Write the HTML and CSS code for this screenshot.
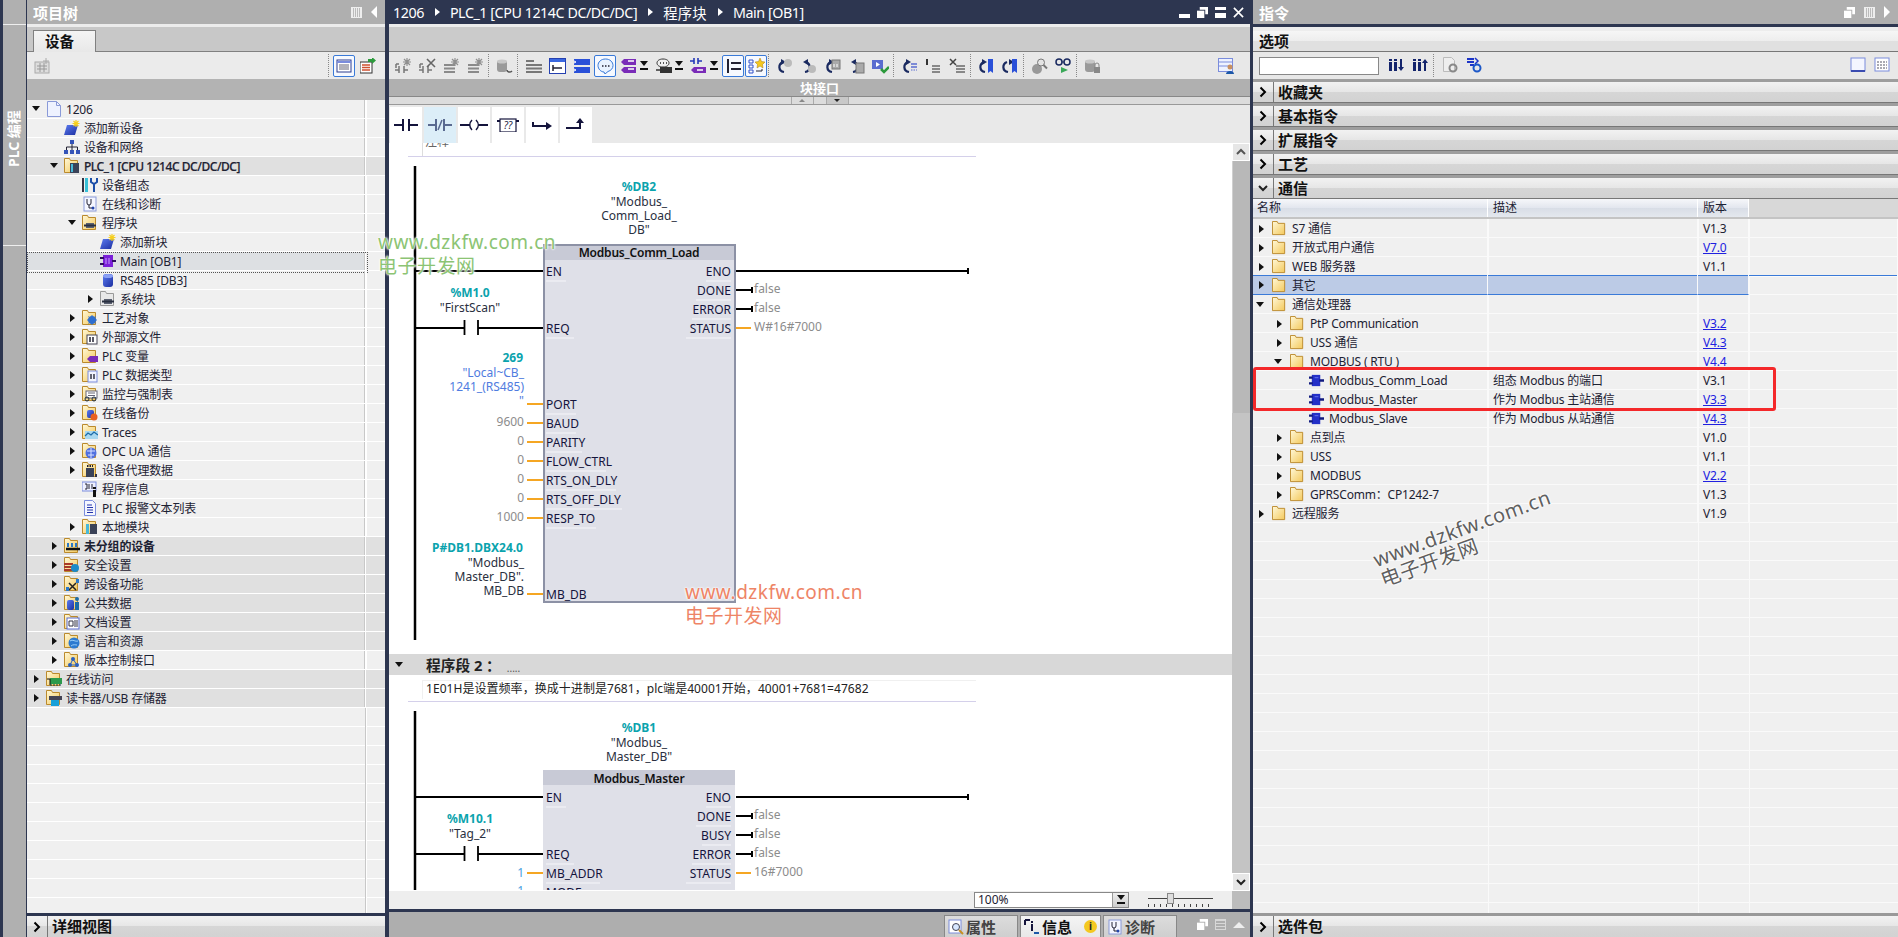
FILE: index.html
```html
<!DOCTYPE html>
<html lang="zh-CN">
<head>
  <meta charset="UTF-8">
  <title>Main [OB1]</title>
  <link rel="stylesheet" href="styles.css">
</head>
<body>
  <svg class="defs">
    <defs>
      <linearGradient id="gf" x1="0" y1="0" x2="1" y2="1"><stop offset="0" stop-color="#fff8d8"/><stop offset="1" stop-color="#f4c95c"/></linearGradient>
      <linearGradient id="gb" x1="0" y1="0" x2="1" y2="1"><stop offset="0" stop-color="#5c7cf0"/><stop offset="1" stop-color="#1c2ea0"/></linearGradient>
      <symbol id="fd" viewBox="0 0 16 16"><path d="M.5 .5h5l1 2h7v12H.5z" fill="url(#gf)" stroke="#bb8a2c"/></symbol>
      <symbol id="new" viewBox="0 0 16 16"><path d="M0 15 3 5h11l-3 10z" fill="url(#gb)"/><path d="M12 0v7M8.5 3.500h7M9.500 1l5 5M14.500 1l-5 5" stroke="#f6cf1e" stroke-width="1.200"/></symbol>
      <symbol id="blockgrey" viewBox="0 0 16 16"><rect x="4" y="8" width="8" height="5" fill="#5a6070"/><path d="M2 10.500h12" stroke="#2a3040" stroke-width="2"/></symbol>
      <symbol id="pin" viewBox="0 0 16 16"><rect x="3" y="2" width="9" height="12" fill="#2430c8"/><path d="M0 5h4M0 11h4M11 8h5" stroke="#101a80" stroke-width="2.500"/><path d="M6 5h4" stroke="#6a78f0"/></symbol>
      <symbol id="hoh" viewBox="0 0 17 16"><path d="M0 12h4M4 8v7M9 8v7M9 12h4M1 6h3M1 6v4" stroke="#777" stroke-width="1.500" fill="none"/></symbol>
      <symbol id="stack" viewBox="0 0 17 16"><path d="M1 7h11M1 10.500h11M1 14h11" stroke="#8a8a8a" stroke-width="2"/></symbol>
      <symbol id="spark" viewBox="0 0 17 16"><path d="M12 0v8M8 4h8M9 1l6 6M15 1l-6 6" stroke="#909090" stroke-width="1.200"/></symbol>
      <symbol id="chev" viewBox="0 0 10 12"><path d="M2.500 1.500 7 6l-4.500 4.500" fill="none" stroke="#000" stroke-width="2"/></symbol>
      <symbol id="chevd" viewBox="0 0 10 12"><path d="M1 4l4 4 4-4" fill="none" stroke="#222" stroke-width="2"/></symbol>
      <symbol id="restore" viewBox="0 0 12 12"><path d="M3 0h9v8H9V3H3z" fill="#fff"/><rect y="4" width="8" height="8" fill="#fff"/></symbol>
      <symbol id="tagpair" viewBox="0 0 17 16"><path d="M4 1h12v6H4L1 4z" fill="#7a2cb8"/><path d="M4 9h12v6H4L1 12z" fill="#7a2cb8"/><path d="M8 3h6M8 11h6" stroke="#fff" stroke-width="1.500"/></symbol>
      <symbol id="redo" viewBox="0 0 17 16"><path d="M8 14C2 13 2 6 7 4" fill="none" stroke="#1a2a60" stroke-width="2.200"/><path d="M5 1l5 3-5 3z" fill="#1a2a60"/></symbol>
      <symbol id="cyl" viewBox="0 0 17 16"><rect x="1" y="2" width="10" height="12" rx="3" fill="#9a9a9a"/><ellipse cx="6" cy="3.500" rx="5" ry="2" fill="#c8c8c8"/></symbol>
    </defs>
  </svg>

  <div class="app">
    <aside class="strip">
      <div class="strip-label">PLC 编程</div>
    </aside>

    <section class="tree-panel">
      <header class="panel-title">
        <span>项目树</span>
        <div class="title-tools">
          <i class="stripes"></i>
          <i class="tri-left"></i>
        </div>
      </header>
      <div class="panel-gap"></div>
      <div class="tab-strip"><div class="tab">设备</div></div>
      <div class="tree-tools">
        <svg class="ico" viewBox="0 0 16 16"><rect x="1" y="4" width="14" height="11" fill="#ddd" stroke="#aaa"/><path d="M3 8h10M3 11h10M6 5v9M10 5v9" stroke="#999"/><path d="M12 0v6M9 3h6" stroke="#aaa"/></svg>
        <i class="tool-sep"></i>
        <div class="tool-on"><svg class="ico" viewBox="0 0 16 16"><rect x="1" y="2" width="14" height="12" fill="#fff" stroke="#2b3d8f"/><path d="M1 4h14" stroke="#7a8cdc" stroke-width="2"/><path d="M3 7h10M3 9h10M3 11h10" stroke="#667"/></svg></div>
        <svg class="ico" viewBox="0 0 16 16"><rect x="0" y="4" width="12" height="11" fill="#fff" stroke="#333"/><path d="M2 7h8M2 9.500h8M2 12h8" stroke="#d05030" stroke-width="1.500"/><path d="M8 1h4V-1l4 3.500-4 3.500V4H8z" fill="#2c9a3c"/></svg>
      </div>
      <div class="tree-gap"></div>
      <div class="tree">
        <div class="tree-row"><i class="arr open"></i><svg class="ico" viewBox="0 0 16 16"><path d="M1.500 .5h9l4 4v11h-13z" fill="#eef2ff" stroke="#8a9ad8"/><path d="M10.500 .5v4h4" fill="none" stroke="#8a9ad8"/></svg><span>1206</span></div>
        <div class="tree-row lv1"><i class="arr none"></i><svg class="ico"><use href="#new"/></svg><span>添加新设备</span></div>
        <div class="tree-row lv1"><i class="arr none"></i><svg class="ico" viewBox="0 0 16 16"><rect x="6" y="1" width="4" height="4" fill="#3554b8"/><path d="M8 5v3M2.500 11V8h11v3M8 8v3" fill="none" stroke="#223"/><rect x="0" y="11" width="4" height="4" fill="#3554b8"/><rect x="6" y="11" width="4" height="4" fill="#3554b8"/><rect x="12" y="11" width="4" height="4" fill="#3554b8"/></svg><span>设备和网络</span></div>
        <div class="tree-row lv1 shade plc"><i class="arr open"></i><svg class="ico"><use href="#fd"/><rect x="6" y="5" width="9" height="10" fill="#3a4258"/><rect x="7" y="6" width="2" height="8" fill="#48b8d8"/></svg><span>PLC_1 [CPU 1214C DC/DC/DC]</span></div>
        <div class="tree-row lv2"><i class="arr none"></i><svg class="ico" viewBox="0 0 16 16"><rect x="0" y="1" width="2" height="14" fill="#334"/><rect x="3" y="1" width="3" height="14" fill="#38c0d8"/><path d="M9 1v4l3 2 3-2V1M12 7v8" fill="none" stroke="#1d4fa8" stroke-width="2"/></svg><span>设备组态</span></div>
        <div class="tree-row lv2"><i class="arr none"></i><svg class="ico" viewBox="0 0 16 16"><rect x="2" y="1" width="12" height="14" fill="#f4f6ff" stroke="#8a9ad8"/><path d="M5 3v4a2 2 0 0 0 4 0V3M7 9v3h4" fill="none" stroke="#223"/><circle cx="11" cy="12" r="1.500" fill="#2244aa"/></svg><span>在线和诊断</span></div>
        <div class="tree-row lv2"><i class="arr open"></i><svg class="ico"><use href="#fd"/><use href="#blockgrey"/></svg><span>程序块</span></div>
        <div class="tree-row lv3"><i class="arr none"></i><svg class="ico"><use href="#new"/></svg><span>添加新块</span></div>
        <div class="tree-row lv3 current"><i class="arr none"></i><svg class="ico" viewBox="0 0 16 16"><rect x="3" y="2" width="10" height="12" fill="#7a1fd8"/><path d="M0 5h4M0 11h4M12 8h4" stroke="#301060" stroke-width="2"/><path d="M6 5v6M9 5v6" stroke="#c8a0f8"/></svg><span>Main [OB1]</span></div>
        <div class="tree-row lv3"><i class="arr none"></i><svg class="ico" viewBox="0 0 16 16"><rect x="3" y="2" width="10" height="13" rx="3" fill="url(#gb)"/><ellipse cx="8" cy="4" rx="5" ry="2" fill="#8aa0f4"/></svg><span>RS485 [DB3]</span></div>
        <div class="tree-row lv3"><i class="arr"></i><svg class="ico"><path d="M.5 .5h5l1 2h7v12H.5z" fill="#e8e8e8" stroke="#999"/><use href="#blockgrey"/></svg><span>系统块</span></div>
        <div class="tree-row lv2"><i class="arr"></i><svg class="ico"><use href="#fd"/><circle cx="10" cy="10" r="4" fill="#2f6fd0"/><path d="M10 5v10M5 10h10M6.500 6.500l7 7M13.500 6.500l-7 7" stroke="#2f6fd0"/></svg><span>工艺对象</span></div>
        <div class="tree-row lv2"><i class="arr"></i><svg class="ico"><use href="#fd"/><rect x="5" y="6" width="10" height="9" fill="#fff" stroke="#445"/><path d="M8 8v5M11 8v5" stroke="#223" stroke-width="1.500"/></svg><span>外部源文件</span></div>
        <div class="tree-row lv2"><i class="arr"></i><svg class="ico"><use href="#fd"/><path d="M8 8h8v6H8l-3-3z" fill="#7a2cb8"/></svg><span>PLC 变量</span></div>
        <div class="tree-row lv2"><i class="arr"></i><svg class="ico"><use href="#fd"/><rect x="6" y="4" width="9" height="11" fill="#f2f4ff" stroke="#7a8cdc"/><path d="M9 7v5M12 7v5" stroke="#334" stroke-width="1.500"/></svg><span>PLC 数据类型</span></div>
        <div class="tree-row lv2"><i class="arr"></i><svg class="ico"><use href="#fd"/><rect x="4" y="5" width="11" height="7" fill="#fff" stroke="#667"/><path d="M6 7h7M6 9.500h7" stroke="#667"/><circle cx="5" cy="13" r="2" fill="none" stroke="#234"/><circle cx="12" cy="13" r="2" fill="none" stroke="#234"/></svg><span>监控与强制表</span></div>
        <div class="tree-row lv2"><i class="arr"></i><svg class="ico"><use href="#fd"/><rect x="5" y="5" width="7" height="8" rx="2" fill="url(#gb)"/><circle cx="12" cy="12" r="3.500" fill="#e86020"/></svg><span>在线备份</span></div>
        <div class="tree-row lv2"><i class="arr"></i><svg class="ico"><use href="#fd"/><rect x="3" y="7" width="13" height="8" fill="#a8d8f0"/><path d="M3 12l3-3 3 2 3-3 4 3" fill="none" stroke="#1c6ca8" stroke-width="1.300"/></svg><span>Traces</span></div>
        <div class="tree-row lv2"><i class="arr"></i><svg class="ico"><use href="#fd"/><circle cx="9" cy="10" r="5.500" fill="#5070e0"/><path d="M5 8h8M6 12h6M9 5v10" stroke="#d8e0ff"/></svg><span>OPC UA 通信</span></div>
        <div class="tree-row lv2"><i class="arr"></i><svg class="ico"><use href="#fd"/><rect x="4" y="6" width="8" height="9" fill="#3a4258"/><path d="M5 4h6" stroke="#223" stroke-width="2" stroke-dasharray="1.500 1"/><rect x="13" y="12" width="2" height="3" fill="#334"/></svg><span>设备代理数据</span></div>
        <div class="tree-row lv2"><i class="arr none"></i><svg class="ico" viewBox="0 0 16 16"><rect x="0" y="1" width="14" height="9" fill="#eef0ff" stroke="#7a8cdc"/><path d="M3 3h2v5H3M7 3v5M10 3v5" fill="none" stroke="#223"/><rect x="11" y="6" width="3" height="2" fill="#111"/><rect x="11" y="9" width="3" height="7" fill="#111"/></svg><span>程序信息</span></div>
        <div class="tree-row lv2"><i class="arr none"></i><svg class="ico" viewBox="0 0 16 16"><path d="M2.500 .5h8l3 3v12h-11z" fill="#f4f6ff" stroke="#7a8cdc"/><path d="M5 5h5M5 7.500h6M5 10h6M5 12.500h6" stroke="#2233aa"/></svg><span>PLC 报警文本列表</span></div>
        <div class="tree-row lv2"><i class="arr"></i><svg class="ico"><use href="#fd"/><rect x="4" y="5" width="3" height="10" fill="#48b8d8"/><rect x="8" y="5" width="7" height="10" fill="#3a4258"/></svg><span>本地模块</span></div>
        <div class="tree-row lv1 shade strong"><i class="arr"></i><svg class="ico"><use href="#fd"/><path d="M2 11h14" stroke="#111" stroke-width="2.500"/><path d="M4 5v4M8 5v4M12 5v4" stroke="#2a78c8" stroke-width="2"/></svg><span>未分组的设备</span></div>
        <div class="tree-row lv1 shade"><i class="arr"></i><svg class="ico"><use href="#fd"/><path d="M0 7h9M0 10h9M0 13h9" stroke="#a83828" stroke-width="2"/><circle cx="11" cy="11" r="4" fill="#1c8ac8"/></svg><span>安全设置</span></div>
        <div class="tree-row lv1 shade"><i class="arr"></i><svg class="ico"><use href="#fd"/><path d="M5 7l7 7M12 7l-7 7" stroke="#222" stroke-width="1.500"/><rect x="12" y="3" width="3" height="4" fill="#2a78c8"/><rect x="2" y="11" width="3" height="4" fill="#2a78c8"/></svg><span>跨设备功能</span></div>
        <div class="tree-row lv1 shade"><i class="arr"></i><svg class="ico"><use href="#fd"/><rect x="3" y="5" width="7" height="10" rx="2" fill="url(#gb)"/><circle cx="13" cy="4" r="2" fill="#1c6ca8"/><rect x="11" y="7" width="4" height="8" fill="#1c6ca8"/></svg><span>公共数据</span></div>
        <div class="tree-row lv1 shade"><i class="arr"></i><svg class="ico"><use href="#fd"/><rect x="3" y="4" width="12" height="11" fill="#fff" stroke="#5a6cd0"/><path d="M5 7h4v5H5zM11 6v7M13 6v7" fill="none" stroke="#334"/></svg><span>文档设置</span></div>
        <div class="tree-row lv1 shade"><i class="arr"></i><svg class="ico"><use href="#fd"/><circle cx="10" cy="10" r="5.500" fill="#2c7ad0"/><path d="M6 8c3-2 5 1 8 0M7 13c2-2 5-1 6-1" stroke="#9ad0f8" fill="none"/></svg><span>语言和资源</span></div>
        <div class="tree-row lv1"><i class="arr"></i><svg class="ico"><use href="#fd"/><path d="M9 7l-3 6h7z" fill="none" stroke="#2a60c0"/><circle cx="9" cy="7" r="2" fill="#2a60c0"/><circle cx="6" cy="13" r="2" fill="#2a60c0"/><circle cx="13" cy="13" r="2" fill="#2a60c0"/></svg><span>版本控制接口</span></div>
        <div class="tree-row shade"><i class="arr"></i><svg class="ico"><use href="#fd"/><rect x="4" y="7" width="12" height="6" fill="#2c9a4c"/><path d="M5 15v-2M8 15v-2M11 15v-2M14 15v-2" stroke="#134"/><path d="M1 8h3v6" stroke="#111" fill="none"/></svg><span>在线访问</span></div>
        <div class="tree-row shade"><i class="arr"></i><svg class="ico"><use href="#fd"/><rect x="3" y="6" width="13" height="4" fill="#445"/><rect x="5" y="10" width="8" height="6" fill="#18a0d8"/></svg><span>读卡器/USB 存储器</span></div>
      </div>
      <div class="dock-gap"></div>
      <div class="dock-bar">
        <div class="dock-arrow"><svg class="chev"><use href="#chev"/></svg></div>
        <div class="dock-name">详细视图</div>
      </div>
    </section>

    <main class="editor">
      <header class="crumbs">
        <span>1206</span><i class="tri"></i>
        <span>PLC_1 [CPU 1214C DC/DC/DC]</span><i class="tri"></i>
        <span class="crumb-zh">程序块</span><i class="tri"></i>
        <span>Main [OB1]</span>
        <div class="win-tools">
          <i class="win-min"></i>
          <svg class="win-ico"><use href="#restore"/></svg>
          <i class="win-max"></i>
          <svg class="win-ico" viewBox="0 0 12 12"><path d="M1 1l10 10M11 1 1 11" stroke="#fff" stroke-width="1.800"/></svg>
        </div>
      </header>
      <div class="panel-gap"></div>
      <div class="editor-band"></div>
      <div class="toolbar">
        <svg class="tb"><use href="#hoh"/><use href="#spark"/></svg>
        <svg class="tb"><use href="#hoh"/><path d="M8 1l8 8M16 1 8 9" stroke="#666" stroke-width="1.600"/></svg>
        <svg class="tb"><use href="#stack"/><use href="#spark"/></svg>
        <svg class="tb"><use href="#stack"/><use href="#spark"/></svg>
        <i class="tb-sep"></i>
        <svg class="tb"><use href="#cyl"/><path d="M16 13c-2 2-5 1-5-1" fill="none" stroke="#555" stroke-width="1.500"/></svg>
        <i class="tb-sep"></i>
        <svg class="tb" viewBox="0 0 17 16"><path d="M1 3h8M1 7h16M1 10.500h16M1 14h16" stroke="#777" stroke-width="2"/></svg>
        <svg class="tb" viewBox="0 0 17 16"><rect x=".5" y=".5" width="16" height="15" fill="#fff" stroke="#2540b0"/><rect x="1" y="1" width="15" height="3" fill="#3a68e0"/><path d="M4 7v6M4 10h9" stroke="#223" stroke-width="1.500"/></svg>
        <svg class="tb" viewBox="0 0 17 16"><rect x="1" y="1" width="16" height="6" fill="#2a50d8"/><rect x="1" y="9" width="16" height="6" fill="#2a50d8"/><path d="M1 3l2 1-2 1M1 11l2 1-2 1" stroke="#fff" fill="none"/></svg>
        <div class="tb-on"><svg class="tb" viewBox="0 0 17 16"><path d="M8.500 1C4 1 1 4 1 7.500S4 14 7 14l1 2 3-2.500c3-1 5-3 5-6C16 4 13 1 8.500 1z" fill="#e8f2ff" stroke="#3a7ad8"/><path d="M5 8h1.500M8 8h1.500M11 8h1.500" stroke="#223" stroke-width="1.500"/></svg></div>
        <div class="tb-drop"><svg class="tb"><use href="#tagpair"/></svg><i class="drop-arrow"></i></div>
        <div class="tb-drop"><svg class="tb" viewBox="0 0 17 16"><path d="M8 1c-4 0-6 2-6 4s2 4 6 4 6-2 6-4-2-4-6-4z" fill="#eee" stroke="#333"/><path d="M5 5h1M8 5h1M11 5h1" stroke="#222" stroke-width="1.500"/><rect x="5" y="9" width="12" height="6" fill="#333"/><path d="M1 12h4" stroke="#333" stroke-width="1.500"/></svg><i class="drop-arrow"></i></div>
        <div class="tb-drop"><svg class="tb" viewBox="0 0 17 16"><path d="M0 3h4M4 0v6M8 0v6M8 3h4" stroke="#2438b8" stroke-width="1.600"/><path d="M4 9h12v6H4L1 12z" fill="#7a2cb8"/><path d="M7 12h6" stroke="#fff" stroke-width="1.500"/></svg><i class="drop-arrow"></i></div>
        <div class="tb-on"><svg class="tb" viewBox="0 0 17 16"><path d="M3 1v14" stroke="#223" stroke-width="2"/><path d="M6 5h10M6 11h10" stroke="#223" stroke-width="2"/></svg></div>
        <div class="tb-on"><svg class="tb" viewBox="0 0 17 16"><path d="M1 2h4v3H1zM1 7h4v3H1zM1 12h4v3H1z" fill="none" stroke="#3050c8"/><path d="M12 0l1.500 3.500 3.500.5-2.500 2.500.5 3.500-3-2-3 2 .5-3.500L7 4l3.500-.5z" fill="#f4c820" stroke="#a87c10" stroke-width=".5"/><path d="M8 13h6v-2" fill="none" stroke="#223"/></svg></div>
        <i class="tb-sep"></i>
        <svg class="tb"><use href="#redo"/><circle cx="12" cy="5" r="4" fill="#bbb"/></svg>
        <svg class="tb" viewBox="0 0 17 16"><g transform="matrix(-1 0 0 1 13 0)"><use href="#redo"/></g><circle cx="12" cy="11" r="4" fill="#bbb"/></svg>
        <svg class="tb"><use href="#redo"/><rect x="8" y="2" width="8" height="9" fill="#aaa" stroke="#777"/><path d="M10 6v3M13 6v3" stroke="#fff"/></svg>
        <svg class="tb" viewBox="0 0 17 16"><g transform="matrix(-1 0 0 1 13 0)"><use href="#redo"/></g><rect x="8" y="5" width="8" height="10" fill="#aaa" stroke="#777"/></svg>
        <svg class="tb" viewBox="0 0 17 16"><rect x="0" y="2" width="11" height="9" fill="#5a6cd0"/><path d="M4 4l4 2.500L4 9z" fill="#fff"/><path d="M9 11l3 3 5-5" fill="none" stroke="#2c9a3c" stroke-width="2.500"/></svg>
        <i class="tb-sep"></i>
        <svg class="tb" viewBox="0 0 17 16"><path d="M8 14C2 13 2 6 7 4" fill="none" stroke="#1a2a60" stroke-width="2.200"/><path d="M5 1l5 3-5 3z" fill="#1a2a60"/><path d="M10 6h6M10 9h6" stroke="#5a6cd0" stroke-width="1.500"/><path d="M10 12h6" stroke="#5a6cd0" stroke-dasharray="1.500 1"/></svg>
        <svg class="tb" viewBox="0 0 17 16"><path d="M2 1v6" stroke="#333" stroke-width="2"/><path d="M7 8h8M7 11h8M7 14h8" stroke="#888" stroke-width="2"/></svg>
        <svg class="tb" viewBox="0 0 17 16"><path d="M1 1l6 6M7 1 1 7" stroke="#444" stroke-width="1.500"/><path d="M7 8h9M7 11h9M7 14h9" stroke="#888" stroke-width="2"/></svg>
        <i class="tb-sep"></i>
        <svg class="tb" viewBox="0 0 17 16"><path d="M7 14C1 13 1 6 6 4" fill="none" stroke="#1a2a60" stroke-width="2.200"/><path d="M4 1l5 3-5 3z" fill="#1a2a60"/><path d="M10 1h5v14l-2.500-2-2.500 2z" fill="#2a50d8"/></svg>
        <svg class="tb" viewBox="0 0 17 16"><path d="M9 14c6-1 6-8 1-10" fill="none" stroke="#1a2a60" stroke-width="2.200" transform="matrix(-1 0 0 1 15 0)"/><path d="M8 1 3 4l5 3z" fill="#1a2a60" transform="matrix(-1 0 0 1 15 0)"/><path d="M10 1h5v14l-2.500-2-2.500 2z" fill="#2a50d8"/></svg>
        <i class="tb-sep"></i>
        <svg class="tb" viewBox="0 0 17 16"><circle cx="6" cy="11" r="5" fill="#999"/><circle cx="10" cy="4.500" r="3.500" fill="#e4e4e4" stroke="#777"/><path d="M12.500 7l3.500 3.500" stroke="#777" stroke-width="2"/></svg>
        <svg class="tb" viewBox="0 0 17 16"><circle cx="4" cy="4" r="3" fill="none" stroke="#1a2a60" stroke-width="1.500"/><circle cx="12" cy="4" r="3" fill="none" stroke="#1a2a60" stroke-width="1.500"/><path d="M7 4h2" stroke="#1a2a60"/><path d="M6 9l7 3-7 3z" fill="#3aa858"/></svg>
        <i class="tb-sep"></i>
        <svg class="tb"><use href="#cyl"/><rect x="10" y="9" width="6" height="6" fill="#888"/><path d="M11 9V7a2 2 0 0 1 4 0v2" fill="none" stroke="#888"/></svg>
        <svg class="tb tb-end" viewBox="0 0 17 16"><rect x=".5" y=".5" width="14" height="13" fill="#eef2ff" stroke="#7a8cdc"/><path d="M1 4h13M1 8h13" stroke="#7a8cdc"/><circle cx="12" cy="9" r="2.500" fill="#c89060"/><path d="M8 16c0-4 8-4 8 0z" fill="#1c58a8"/></svg>
      </div>
      <div class="iface-bar">块接口</div>
      <div class="iface-handle">
        <div class="handle"><i class="tri-up"></i></div>
        <div class="handle handle-on"><i class="tri-down"></i></div>
      </div>
      <div class="favs">
        <div class="fav"><svg class="fav-ico" viewBox="0 0 30 14"><path d="M3 7h9M12 1v12M18 1v12M18 7h9" stroke="#14143c" stroke-width="2"/></svg></div>
        <div class="fav fav-on"><svg class="fav-ico" viewBox="0 0 30 14"><path d="M3 7h8M11 1v12M19 1v12M19 7h8" stroke="#5a6a90" stroke-width="2"/><path d="M17 2l-4 10" stroke="#5a6a90" stroke-width="1.500"/></svg></div>
        <div class="fav"><svg class="fav-ico" viewBox="0 0 30 14"><path d="M1 7h10M19 7h10" stroke="#14143c" stroke-width="2"/><path d="M13 2c-3 3-3 7 0 10M17 2c3 3 3 7 0 10" fill="none" stroke="#14143c" stroke-width="1.500"/></svg></div>
        <div class="fav"><svg class="fav-ico" viewBox="0 0 30 14"><rect x="7" y="1" width="16" height="13" fill="none" stroke="#14143c" stroke-width="1.200"/><path d="M4 3h3M23 3h3" stroke="#14143c" stroke-width="2"/><text class="fav-q" x="15" y="11">??</text></svg></div>
        <div class="fav"><svg class="fav-ico" viewBox="0 0 30 14"><path d="M6 4v4h14" fill="none" stroke="#14143c" stroke-width="2"/><path d="M19 4l6 4-6 4z" fill="#14143c"/></svg></div>
        <div class="fav"><svg class="fav-ico" viewBox="0 0 30 14"><path d="M5 10h14V4" fill="none" stroke="#14143c" stroke-width="2"/><path d="M15 5l4-5 4 5z" fill="#14143c"/></svg></div>
      </div>

      <div class="work">
        <div class="canvas">
          <div class="clip-note"><span>注释</span></div>

          <svg class="lad net1" viewBox="389 157 843 497">
            <path class="rail" d="M415 166V640"/>
            <path class="wire" d="M415 271H544M736 271H968M968 268V274M736 290H752M752 287V293M736 309H752M752 306V312M415 328H464M478 328H544"/>
            <path class="bar" d="M464.500 320V335M478 320V335"/>
            <path class="wire-o" d="M736 328H751M527 404H544M527 423H544M527 442H544M527 461H544M527 480H544M527 499H544M527 518H544M527 594H544"/>
            <text class="addr mid" x="639" y="191">%DB2</text>
            <text class="tag mid" x="639" y="206">"Modbus_</text>
            <text class="tag mid" x="639" y="220">Comm_Load_</text>
            <text class="tag mid" x="639" y="234">DB"</text>
            <rect class="fb sel" x="544" y="245" width="191" height="357"/>
            <rect class="fb-head" x="545" y="246" width="189" height="14"/>
            <text class="fb-name mid" x="639" y="257">Modbus_Comm_Load</text>
            <path class="pin-line" d="M546 281H566M546 338H574M546 414H576M546 433H576M546 452H582M546 471H606M546 490H616M546 509H622M546 528H596M731 281H706M731 300H696M731 319H692M731 338H686"/>
            <text class="pin" x="546" y="276">EN</text>
            <text class="pin" x="546" y="333">REQ</text>
            <text class="pin" x="546" y="409">PORT</text>
            <text class="pin" x="546" y="428">BAUD</text>
            <text class="pin" x="546" y="447">PARITY</text>
            <text class="pin" x="546" y="466">FLOW_CTRL</text>
            <text class="pin" x="546" y="485">RTS_ON_DLY</text>
            <text class="pin" x="546" y="504">RTS_OFF_DLY</text>
            <text class="pin" x="546" y="523">RESP_TO</text>
            <text class="pin" x="546" y="599">MB_DB</text>
            <text class="pin end" x="731" y="276">ENO</text>
            <text class="pin end" x="731" y="295">DONE</text>
            <text class="pin end" x="731" y="314">ERROR</text>
            <text class="pin end" x="731" y="333">STATUS</text>
            <text class="addr mid" x="470" y="297">%M1.0</text>
            <text class="tag mid" x="470" y="312">"FirstScan"</text>
            <text class="addr end" x="523" y="362">269</text>
            <text class="local end" x="524" y="377">"Local~CB_</text>
            <text class="local end" x="524" y="391">1241_(RS485)</text>
            <text class="local end" x="524" y="405">"</text>
            <text class="val end" x="524" y="426">9600</text>
            <text class="val end" x="524" y="445">0</text>
            <text class="val end" x="524" y="464">0</text>
            <text class="val end" x="524" y="483">0</text>
            <text class="val end" x="524" y="502">0</text>
            <text class="val end" x="524" y="521">1000</text>
            <text class="addr end" x="523" y="552">P#DB1.DBX24.0</text>
            <text class="tag end" x="524" y="567">"Modbus_</text>
            <text class="tag end" x="524" y="581">Master_DB".</text>
            <text class="tag end" x="524" y="595">MB_DB</text>
            <text class="val" x="754" y="293">false</text>
            <text class="val" x="754" y="312">false</text>
            <text class="val" x="754" y="331">W#16#7000</text>
          </svg>

          <div class="net-head">
            <i class="arr open"></i>
            <span class="net-title">程序段 2 ：</span>
            <span class="net-dots">.....</span>
          </div>
          <div class="net-note"><p>1E01H是设置频率，换成十进制是7681，plc端是40001开始，40001+7681=47682</p></div>

          <svg class="lad net2" viewBox="389 703 843 188">
            <path class="rail" d="M415 712V891"/>
            <path class="wire" d="M415 798H543M736 798H968M968 795V801M736 817H752M752 814V820M736 836H752M752 833V839M736 855H752M752 852V858M415 855H464M478 855H543"/>
            <path class="bar" d="M464.500 847V862M478 847V862"/>
            <path class="wire-o" d="M736 874H751M527 874H543M527 892H543"/>
            <text class="addr mid" x="639" y="733">%DB1</text>
            <text class="tag mid" x="639" y="748">"Modbus_</text>
            <text class="tag mid" x="639" y="762">Master_DB"</text>
            <rect class="fb" x="543" y="771" width="192" height="130"/>
            <rect class="fb-head" x="543" y="771" width="192" height="15"/>
            <text class="fb-name mid" x="639" y="784">Modbus_Master</text>
            <path class="pin-line" d="M546 808H566M546 865H574M546 884H600M731 808H706M731 827H696M731 846H702M731 865H692M731 884H686"/>
            <text class="pin" x="546" y="803">EN</text>
            <text class="pin" x="546" y="860">REQ</text>
            <text class="pin" x="546" y="879">MB_ADDR</text>
            <text class="pin" x="546" y="898">MODE</text>
            <text class="pin end" x="731" y="803">ENO</text>
            <text class="pin end" x="731" y="822">DONE</text>
            <text class="pin end" x="731" y="841">BUSY</text>
            <text class="pin end" x="731" y="860">ERROR</text>
            <text class="pin end" x="731" y="879">STATUS</text>
            <text class="addr mid" x="470" y="824">%M10.1</text>
            <text class="tag mid" x="470" y="839">"Tag_2"</text>
            <text class="const end" x="524" y="878">1</text>
            <text class="const end" x="524" y="896">1</text>
            <text class="val" x="754" y="820">false</text>
            <text class="val" x="754" y="839">false</text>
            <text class="val" x="754" y="858">false</text>
            <text class="val" x="754" y="877">16#7000</text>
          </svg>
        </div>
        <div class="vscroll">
          <div class="scroll-btn"><svg class="scroll-chev" viewBox="0 0 10 12"><path d="M1 8l4-4 4 4" fill="none" stroke="#555" stroke-width="2"/></svg></div>
          <div class="scroll-thumb"></div>
          <div class="scroll-track"></div>
          <div class="scroll-btn"><svg class="scroll-chev"><use href="#chevd"/></svg></div>
        </div>
      </div>

      <div class="zoom-bar">
        <div class="zoom-box"><span>100%</span><div class="zoom-drop"><i class="drop-arrow"></i></div></div>
        <div class="slider"><i class="slider-thumb"></i></div>
      </div>
      <div class="dock-gap"></div>
      <div class="bottom-tabs">
        <div class="btab">
          <svg class="ico" viewBox="0 0 16 16"><rect x="1" y="1" width="12" height="13" fill="#fff" stroke="#7a8cdc"/><circle cx="8" cy="8" r="3.500" fill="#d8e8ff" stroke="#445"/><path d="M11 11l4 4" stroke="#c89020" stroke-width="2"/></svg>
          <span>属性</span>
        </div>
        <div class="btab btab-on">
          <svg class="ico" viewBox="0 0 16 16"><path d="M1 1h5M1 1v5" stroke="#14143c" stroke-width="2"/><rect x="7" y="2" width="2" height="2" fill="#14143c"/><rect x="7" y="5" width="2" height="7" fill="#14143c"/><path d="M10 14h5" stroke="#1c58a8" stroke-width="2"/></svg>
          <span>信息</span>
          <i class="info-dot">i</i>
        </div>
        <div class="btab">
          <svg class="ico" viewBox="0 0 16 16"><rect x="2" y="1" width="12" height="14" fill="#f4f6ff" stroke="#8a9ad8"/><path d="M5 3v4a2 2 0 0 0 4 0V3M7 9v3h3" fill="none" stroke="#223"/><circle cx="11" cy="12" r="1.500" fill="#2244aa"/></svg>
          <span>诊断</span>
        </div>
        <div class="btab-tools">
          <svg class="win-ico"><use href="#restore"/></svg>
          <i class="lines-ico"></i>
          <i class="tri-big"></i>
        </div>
      </div>
    </main>

    <aside class="ins-panel">
      <header class="panel-title ins-title">
        <span>指令</span>
        <div class="title-tools">
          <svg class="win-ico"><use href="#restore"/></svg>
          <i class="stripes"></i>
          <i class="tri-right"></i>
        </div>
      </header>
      <div class="options-gap"></div>
      <div class="options-head">选项</div>
      <div class="ins-tools">
        <input class="ins-search" type="text">
        <svg class="ico" viewBox="0 0 16 16"><path d="M1 5h3v9H1zM6 5h3v9H6z" fill="#14246c"/><path d="M1 2h3v2H1zM6 2h3v2H6z" fill="#14246c"/><path d="M13 2v10" stroke="#14246c" stroke-width="2"/><path d="M10 10h6l-3 4z" fill="#14246c"/></svg>
        <svg class="ico" viewBox="0 0 16 16"><path d="M1 5h3v9H1zM6 5h3v9H6z" fill="#14246c"/><path d="M1 2h3v2H1zM6 2h3v2H6z" fill="#14246c"/><path d="M13 4v10" stroke="#14246c" stroke-width="2"/><path d="M10 6h6l-3-4z" fill="#14246c"/></svg>
        <i class="tool-sep"></i>
        <svg class="ico" viewBox="0 0 16 16"><path d="M1.500 .5h8l3 3v11h-11z" fill="#eee" stroke="#bbb"/><circle cx="11" cy="11" r="3.500" fill="none" stroke="#888" stroke-width="2"/></svg>
        <svg class="ico" viewBox="0 0 16 16"><path d="M1 2h7M1 5h7M8 8H4" stroke="#1c34c8" stroke-width="2"/><path d="M9 1l3 3-3 3" fill="none" stroke="#1c34c8" stroke-width="1.500"/><circle cx="11" cy="11" r="3.500" fill="none" stroke="#1c58c8" stroke-width="2"/></svg>
        <svg class="ico ins-right" viewBox="0 0 16 16"><rect x="1" y="1" width="14" height="13" fill="#f4f6ff" stroke="#7a8cdc"/><path d="M1 14h14" stroke="#3a4cb0" stroke-width="2"/></svg>
        <svg class="ico" viewBox="0 0 16 16"><rect x="1" y="1" width="14" height="13" fill="#fff" stroke="#7a8cdc"/><path d="M3 5h10M3 8h10M3 11h10" stroke="#556" stroke-dasharray="2 1"/></svg>
      </div>
      <div class="acc-gap"></div>
      <div class="acc"><div class="dock-arrow"><svg class="chev"><use href="#chev"/></svg></div><div class="dock-name">收藏夹</div></div>
      <div class="acc"><div class="dock-arrow"><svg class="chev"><use href="#chev"/></svg></div><div class="dock-name">基本指令</div></div>
      <div class="acc"><div class="dock-arrow"><svg class="chev"><use href="#chev"/></svg></div><div class="dock-name">扩展指令</div></div>
      <div class="acc"><div class="dock-arrow"><svg class="chev"><use href="#chev"/></svg></div><div class="dock-name">工艺</div></div>
      <div class="acc acc-last"><div class="dock-arrow"><svg class="chev"><use href="#chevd"/></svg></div><div class="dock-name">通信</div></div>
      <div class="ins-head">
        <div>名称</div><div>描述</div><div>版本</div><div class="ins-head-rest"></div>
      </div>
      <div class="ins-table">
        <div class="ins-row"><div class="cell-name"><i class="arr"></i><svg class="fold"><use href="#fd"/></svg><span>S7 通信</span></div><div></div><div>V1.3</div><div></div></div>
        <div class="ins-row"><div class="cell-name"><i class="arr"></i><svg class="fold"><use href="#fd"/></svg><span>开放式用户通信</span></div><div></div><div><a class="ver-link">V7.0</a></div><div></div></div>
        <div class="ins-row before-sel"><div class="cell-name"><i class="arr"></i><svg class="fold"><use href="#fd"/></svg><span>WEB 服务器</span></div><div></div><div>V1.1</div><div></div></div>
        <div class="ins-row sel"><div class="cell-name"><i class="arr"></i><svg class="fold"><use href="#fd"/></svg><span>其它</span></div><div></div><div></div><div></div></div>
        <div class="ins-row"><div class="cell-name"><i class="arr open"></i><svg class="fold"><use href="#fd"/></svg><span>通信处理器</span></div><div></div><div></div><div></div></div>
        <div class="ins-row lv1"><div class="cell-name"><i class="arr"></i><svg class="fold"><use href="#fd"/></svg><span>PtP Communication</span></div><div></div><div><a class="ver-link">V3.2</a></div><div></div></div>
        <div class="ins-row lv1"><div class="cell-name"><i class="arr"></i><svg class="fold"><use href="#fd"/></svg><span>USS 通信</span></div><div></div><div><a class="ver-link">V4.3</a></div><div></div></div>
        <div class="ins-row lv1"><div class="cell-name"><i class="arr open"></i><svg class="fold"><use href="#fd"/></svg><span>MODBUS ( RTU )</span></div><div></div><div><a class="ver-link">V4.4</a></div><div></div></div>
        <div class="ins-row lv2"><div class="cell-name"><svg class="fold"><use href="#pin"/></svg><span>Modbus_Comm_Load</span></div><div>组态 Modbus 的端口</div><div>V3.1</div><div></div></div>
        <div class="ins-row lv2"><div class="cell-name"><svg class="fold"><use href="#pin"/></svg><span>Modbus_Master</span></div><div>作为 Modbus 主站通信</div><div><a class="ver-link">V3.3</a></div><div></div></div>
        <div class="ins-row lv2"><div class="cell-name"><svg class="fold"><use href="#pin"/></svg><span>Modbus_Slave</span></div><div>作为 Modbus 从站通信</div><div><a class="ver-link">V4.3</a></div><div></div></div>
        <div class="ins-row lv1"><div class="cell-name"><i class="arr"></i><svg class="fold"><use href="#fd"/></svg><span>点到点</span></div><div></div><div>V1.0</div><div></div></div>
        <div class="ins-row lv1"><div class="cell-name"><i class="arr"></i><svg class="fold"><use href="#fd"/></svg><span>USS</span></div><div></div><div>V1.1</div><div></div></div>
        <div class="ins-row lv1"><div class="cell-name"><i class="arr"></i><svg class="fold"><use href="#fd"/></svg><span>MODBUS</span></div><div></div><div><a class="ver-link">V2.2</a></div><div></div></div>
        <div class="ins-row lv1"><div class="cell-name"><i class="arr"></i><svg class="fold"><use href="#fd"/></svg><span>GPRSComm：CP1242-7</span></div><div></div><div>V1.3</div><div></div></div>
        <div class="ins-row"><div class="cell-name"><i class="arr"></i><svg class="fold"><use href="#fd"/></svg><span>远程服务</span></div><div></div><div>V1.9</div><div></div></div>
      </div>
      <div class="ins-gap"></div>
      <div class="dock-bar">
        <div class="dock-arrow"><svg class="chev"><use href="#chev"/></svg></div>
        <div class="dock-name">选件包</div>
      </div>
    </aside>

    <!-- things pasted over the screenshot -->
    <div class="red-box"></div>
    <div class="stamp stamp-green"><div>www.dzkfw.com.cn</div><div>电子开发网</div></div>
    <div class="stamp stamp-orange"><div>www.dzkfw.com.cn</div><div>电子开发网</div></div>
    <div class="stamp stamp-grey"><div>www.dzkfw.com.cn</div><div>电子开发网</div></div>
  </div>
</body>
</html>
```

FILE: styles.css
```css
* { box-sizing: border-box; }
html, body { margin: 0; height: 100%; overflow: hidden; }
body { background-color: #2d3650; font-family: "Noto Sans", "Noto Sans CJK SC", sans-serif; font-size: 12px; color: #1d2233; }
i { font-style: normal; display: block; flex: none; }
svg { flex: none; }
.defs { position: absolute; width: 0; height: 0; }

.app { position: relative; display: flex; height: 937px; padding-left: 3px; }

/* far left strip */
.strip { width: 23px; margin-right: 1px; background: #b0b0b0; border-top: 24px solid #b0b0b0; position: relative; }
.strip::before, .strip::after { content: ""; position: absolute; left: 0; right: 0; height: 1px; background: #eee; }
.strip::before { top: 0; }
.strip::after { top: 221px; }
.strip-label { position: absolute; top: 83px; left: 1px; width: 20px; height: 60px; writing-mode: vertical-rl; text-orientation: sideways; transform: rotate(180deg); color: #fff; font-size: 14px; font-weight: 700; text-align: left; white-space: nowrap; line-height: 20px; }

/* project tree */
.tree-panel { width: 358px; margin-right: 4px; display: flex; flex-direction: column; background: #f0f0f0; }
.panel-title { height: 24px; flex: none; background: #afafaf; color: #fff; font-size: 15px; font-weight: 700; display: flex; align-items: center; justify-content: space-between; padding: 0 8px 0 6px; }
.title-tools { display: flex; align-items: center; gap: 9px; }
.stripes { width: 11px; height: 11px; background: repeating-linear-gradient(90deg, #eee 0 1px, #bbb 1px 2px); border: 1px solid #eee; }
.tri-left { border: 6px solid transparent; border-left: 0; border-right: 6px solid #fff; }
.tri-right { border: 6px solid transparent; border-right: 0; border-left: 6px solid #fff; }
.panel-gap { height: 3px; flex: none; background: #ececec; }
.tab-strip { height: 25px; flex: none; background: #c8c8c8; border-bottom: 1px solid #808080; padding: 3px 0 0 6px; }
.tab { width: 63px; height: 22px; padding-left: 11px; background: linear-gradient(#f4f4f4, #e8e8e8); border: 1px solid #808080; border-bottom: 0; font-size: 14.5px; font-weight: 700; color: #111; line-height: 21px; }
.tree-tools { height: 27px; flex: none; background: #ebebeb; display: flex; align-items: center; padding: 0 9px 0 7px; }
.tree-tools > .tool-sep { margin-left: auto; margin-right: 4px; }
.tool-sep { width: 1px; height: 23px; border-left: 1px dotted #888; }
.tool-on { width: 22px; height: 22px; margin-right: 5px; border: 1px solid #3a7ad8; background: #f6f9ff; display: flex; align-items: center; justify-content: center; border-radius: 2px; }
.ico { width: 16px; height: 16px; display: block; }
.tree-gap { height: 21px; flex: none; background: #b3b3b3; }

.tree { flex: 1; background:
    linear-gradient(90deg, transparent 338px, #c8c8c8 338px, #c8c8c8 339px, #fff 339px, #fff 340px, transparent 340px),
    repeating-linear-gradient(#f0f0f0 0 18px, #fff 18px 19px); }
.tree-row { position: relative; height: 19px; display: flex; align-items: center; border-bottom: 1px solid #fff; white-space: nowrap; color: #1d2233; letter-spacing: -.2px; }
.tree-row::after { content: ""; margin-left: auto; width: 20px; height: 18px; border-left: 1px solid #c8c8c8; box-shadow: inset 1px 0 #fff; }
.lv1 { padding-left: 18px; }
.lv2 { padding-left: 36px; }
.lv3 { padding-left: 54px; }
.tree-row .ico { margin: 0 4px 0 1px; }
.shade { background: #e0e0e0; }
.plc span { font-weight: 500; letter-spacing: -.45px; -webkit-text-stroke: .2px #1d2233; }
.strong span { font-weight: 700; }
.current { background: linear-gradient(90deg, #dde0e3 338px, #f0f0f0 338px); }
.current::before { content: ""; position: absolute; left: 0; top: 0; width: 339px; height: 19px; border: 1px dotted #555; }
.arr { width: 18px; height: 10px; position: relative; }
.arr::before { content: ""; position: absolute; left: 7px; top: 1px; border: 4px solid transparent; border-right: 0; border-left: 5px solid #111; }
.arr.open::before { left: 5px; top: 2px; border: 4px solid transparent; border-bottom: 0; border-top: 5px solid #111; border-left-width: 4px; }
.arr.none::before { display: none; }

.dock-gap { height: 3px; flex: none; background: #2d3650; }
.dock-bar { height: 21px; flex: none; display: flex; background: linear-gradient(#f2f2f2, #e6e6e6 50%, #d6d6d6 50%, #d2d2d2); }
.dock-arrow { width: 21px; flex: none; border-right: 1px solid #777; display: flex; align-items: center; justify-content: center; }
.chev { width: 10px; height: 12px; display: block; }
.dock-name { padding-left: 4px; font-size: 15px; font-weight: 700; color: #111; line-height: 20px; white-space: nowrap; }

/* main editor */
.editor { width: 861px; margin-right: 3px; display: flex; flex-direction: column; background: #fff; min-width: 0; }
.crumbs { height: 24px; flex: none; background: #2d3650; color: #fff; font-size: 14.3px; letter-spacing: -.45px; display: flex; align-items: center; padding-left: 4px; white-space: nowrap; }
.crumb-zh { letter-spacing: .3px; }
.tri { margin: 0 10px 0 11px; border: 4px solid transparent; border-right: 0; border-left: 5px solid #fff; }
.win-tools { margin-left: auto; display: flex; align-items: center; gap: 7px; padding-right: 6px; }
.win-min { width: 11px; height: 4px; background: #fff; margin-top: 8px; }
.win-max { width: 11px; height: 11px; background: #fff; border-top: 3px solid #fff; box-shadow: inset 0 3px #2d3650; }
.win-ico { width: 11px; height: 11px; display: block; }
.editor-band { height: 25px; flex: none; background: #cbcbcb; border-bottom: 1px solid #808080; }
.toolbar { height: 27px; flex: none; background: #e8e8e8; display: flex; align-items: center; gap: 7px; padding: 0 15px 0 6px; }
.tb { width: 17px; height: 16px; display: block; }
.tb-sep { width: 1px; height: 23px; margin-left: -3px; border-left: 1px dotted #888; }
.tb-on { width: 22px; height: 22px; margin: 0 -3px; border: 1px solid #3a7ad8; border-radius: 2px; background: #f6f9ff; display: flex; align-items: center; justify-content: center; }
.tb-drop { width: 28px; display: flex; align-items: center; justify-content: space-between; }
.drop-arrow { width: 8px; height: 8px; position: relative; border-bottom: 2px solid #111; }
.drop-arrow::before { content: ""; position: absolute; left: 0; top: -1px; border: 4px solid transparent; border-bottom: 0; border-top: 5px solid #111; }
.tb-end { margin-left: auto; }
.iface-bar { height: 18px; flex: none; background: #b0b0b0; color: #fff; font-size: 13px; font-weight: 700; text-align: center; line-height: 18px; border-bottom: 1px solid #888; }
.iface-handle { height: 8px; flex: none; background: #dcdcdc; border-bottom: 1px solid #999; display: flex; justify-content: center; gap: 12px; padding-left: 0; }
.handle { width: 23px; height: 7px; border: 1px solid #aaa; border-width: 0 1px; display: flex; justify-content: center; align-items: center; }
.handle-on { background: #c8c8c8; }
.tri-up { border: 3px solid transparent; border-top: 0; border-bottom: 3px solid #888; }
.tri-down { border: 3px solid transparent; border-bottom: 0; border-top: 3px solid #222; }
.favs { height: 38px; flex: none; background: #e9e9e9; display: flex; gap: 2px; padding: 2px 0 0 1px; }
.fav { width: 32px; height: 36px; background: #fff; display: flex; align-items: center; justify-content: center; }
.fav-on { background: #dceef8; }
.fav-ico { width: 30px; height: 14px; display: block; }
.fav-q { font-size: 10px; font-style: italic; fill: #14143c; text-anchor: middle; }

.work { flex: 1; display: flex; min-height: 0; }
.canvas { flex: 1; min-width: 0; overflow: hidden; background: #fff; }
.clip-note { height: 14px; margin-left: 19px; width: 568px; border-bottom: 1px solid #d4d0ea; overflow: hidden; }
.clip-note span { display: block; margin: -11px 0 0 14px; padding-left: 2px; border-left: 1px solid #ddd; color: #666; height: 24px; }
.lad { display: block; width: 843px; }
.net1 { height: 497px; }
.net2 { height: 188px; }
.lad text { font-size: 12px; font-family: "Noto Sans", sans-serif; }
.rail { stroke: #000; stroke-width: 2.5; fill: none; }
.wire { stroke: #000; stroke-width: 2; fill: none; }
.bar { stroke: #000; stroke-width: 1.8; fill: none; }
.wire-o { stroke: #f5a623; stroke-width: 2; fill: none; }
.fb { fill: #dfe0e8; }
.fb.sel { stroke: #8c91a5; stroke-width: 2; }
.fb-head { fill: #c8cad6; }
.lad .fb-name { fill: #111; font-weight: 600; letter-spacing: -.2px; }
.pin-line { stroke: #f6f6fa; stroke-width: 1; fill: none; }
.lad .addr { fill: #0aa3ad; font-weight: 700; }
.lad .tag { fill: #2a3040; }
.lad .local { fill: #4f7ce0; }
.lad .val { fill: #8c8c8c; }
.lad .const { fill: #4aa0e0; }
.lad .pin { fill: #14143c; }
.mid { text-anchor: middle; }
.end { text-anchor: end; }

.net-head { height: 21px; background: #d8d8d8; display: flex; align-items: center; padding-left: 1px; white-space: nowrap; }
.net-head .arr { width: 16px; }
.net-title { margin-left: 20px; font-size: 14.7px; font-weight: 700; color: #222; }
.net-dots { margin-left: 6px; margin-top: 6px; font-size: 10px; color: #555; }
.net-note { height: 27px; margin-left: 19px; width: 568px; padding: 5px 0 0 14px; border-bottom: 1px solid #d4d0ea; }
.net-note p { margin: 0; height: 19px; padding-left: 3px; border: 1px solid #f0f0f0; border-width: 1px 0 0 1px; line-height: 15px; white-space: nowrap; color: #222; font-size: 12px; letter-spacing: .05px; }

.vscroll { width: 18px; flex: none; background: #c0c0c0; display: flex; flex-direction: column; }
.scroll-btn { height: 18px; flex: none; background: #e6e6e6; border: 1px solid #fff; display: flex; align-items: center; justify-content: center; }
.scroll-chev { width: 10px; height: 12px; display: block; }
.scroll-thumb { height: 252px; flex: none; background: #b8b8b8; box-shadow: inset 1px 0 #d0d0d0; }
.scroll-track { flex: 1; background: #c4c4c4; }

.zoom-bar { height: 18px; flex: none; background: #eee; border-right: 18px solid #bcbcbc; display: flex; align-items: center; padding-left: 585px; }
.zoom-box { width: 155px; height: 16px; background: #fff; border: 1px solid #888; display: flex; justify-content: space-between; align-items: center; padding-left: 3px; font-size: 12px; line-height: 14px; }
.zoom-drop { width: 16px; height: 14px; background: linear-gradient(#eee, #ccc); border-left: 1px solid #999; display: flex; align-items: center; justify-content: center; }
.slider { position: relative; width: 65px; height: 14px; margin-left: 19px; border-top: 0; background: linear-gradient(#444, #444) 0 5px / 100% 1px no-repeat, repeating-linear-gradient(90deg, #444 0 1px, transparent 1px 6px) 0 11px / 100% 3px no-repeat; }
.slider-thumb { position: absolute; left: 19px; top: 0; width: 7px; height: 11px; background: #ddd; border: 1px solid #888; }

.bottom-tabs { height: 25px; flex: none; background: #aeaeae; display: flex; align-items: flex-end; padding-left: 555px; }
.btab { width: 74px; height: 22px; margin-right: 2px; background: linear-gradient(#dcdcdc, #cfcfcf); border: 1px solid #888; border-bottom: 0; display: flex; align-items: center; gap: 2px; padding-left: 3px; font-size: 15px; font-weight: 700; color: #444; white-space: nowrap; }
.btab-on { width: 81px; background: linear-gradient(#f4f4f4, #e8e8e8); color: #111; }
.info-dot { width: 13px; height: 13px; margin-left: 10px; border-radius: 50%; background: #f4c820; color: #222; font-size: 10px; line-height: 13px; text-align: center; font-weight: 700; }
.btab-tools { margin-left: 18px; height: 25px; display: flex; align-items: center; gap: 7px; }
.lines-ico { width: 11px; height: 11px; background: repeating-linear-gradient(#d8d8d8 0 1px, #aeaeae 1px 3px); border: 1px solid #d8d8d8; }
.tri-big { border: 6px solid transparent; border-top: 0; border-bottom: 6px solid #eee; }

/* instructions */
.ins-panel { width: 645px; display: flex; flex-direction: column; background: #f0f0f0; }
.ins-title { padding-right: 8px; }
.options-gap { height: 3px; flex: none; background: #2d3650; }
.options-head { height: 25px; flex: none; padding: 4px 0 0 6px; background: linear-gradient(#ededed 4px, #f6f6f6 4px, #ededed 60%, #e0e0e0 60%); border-bottom: 1px solid #777; font-size: 15px; font-weight: 700; color: #111; line-height: 20px; }
.ins-tools { height: 27px; flex: none; background: #e8e8e8; display: flex; align-items: center; padding: 0 8px 0 6px; gap: 8px; }
.ins-search { width: 120px; height: 18px; padding: 0; margin-right: 1px; border: 1px solid #888; background: #fff; }
.ins-tools .tool-sep { margin: 0 0 0 -3px; }
.ins-tools .ico { margin-top: -2px; }
.ins-right { margin-left: auto; }
.acc-gap { height: 3px; flex: none; background: #9e9e9e; }
.acc { height: 24px; flex: none; display: flex; background: linear-gradient(#f2f2f2, #e6e6e6 10px, #d6d6d6 10px, #d2d2d2 20px, #777 20px, #777 21px, #9e9e9e 21px); }
.acc .dock-arrow { height: 20px; }
.acc-last { height: 21px; background: linear-gradient(#f2f2f2, #e6e6e6 10px, #d6d6d6 10px, #d2d2d2 20px, #777 20px); }
.ins-head { height: 20px; flex: none; display: grid; grid-template-columns: 235px 210px 51px 1fr; background: linear-gradient(#f6f7fa, #e2e6ee 50%, #d8dde6 50%, #e4e8ee); border-bottom: 2px solid #c4c4c4; line-height: 18px; }
.ins-head > div { padding-left: 5px; border-right: 1px solid #fff; }
.ins-head > div:first-child { padding-left: 4px; }
.ins-head .ins-head-rest { background: #d8d8d8; border: 0; }
.ins-table { flex: 1; background:
    linear-gradient(90deg, transparent 235px, #fafafa 235px, #fafafa 236px, transparent 236px, transparent 445px, #fafafa 445px, #fafafa 446px, transparent 446px, transparent 496px, #fafafa 496px, #fafafa 497px, transparent 497px),
    repeating-linear-gradient(#f0f0f0 0 18px, #fafafa 18px 19px); }
.ins-row { height: 19px; display: grid; grid-template-columns: 235px 210px 51px 1fr; border-bottom: 1px solid #fafafa; line-height: 19px; white-space: nowrap; color: #1d2233; letter-spacing: -.2px; }
.ins-row > div { padding-left: 5px; border-right: 1px solid #fafafa; }
.ins-row > .cell-name { padding-left: 0; display: flex; align-items: center; }
.ins-row .arr::before { left: 6px; }
.ins-row .arr.open::before { left: 3px; }
.ins-row .arr { width: 19px; }
.fold { width: 15px; height: 15px; margin-right: 5px; display: block; }
.ins-row.lv1 .cell-name { padding-left: 18px; }
.ins-row.lv2 .cell-name { padding-left: 56px; }
.ins-row.lv1, .ins-row.lv2 { padding-left: 0; }
.ins-row.before-sel { border-bottom-color: #3a7ad8; }
.ins-row.before-sel > div:last-child { box-shadow: 0 1px #fafafa; }
.ins-row.sel { border-bottom-color: transparent; }
.ins-row.sel > div { background: #bccbe6; border-bottom: 1px solid #3a7ad8; height: 19px; }
.ins-row.sel > div:last-child { background: transparent; border-bottom-color: #fafafa; }
.ver-link { color: #2020e0; text-decoration: underline; }
.ins-gap { height: 3px; flex: none; background: #999; }

/* overlays */
.red-box { position: absolute; left: 1253px; top: 367px; width: 523px; height: 44px; border: 3px solid #f4282a; border-radius: 3px; }
.stamp { position: absolute; white-space: nowrap; font-size: 19px; line-height: 24px; letter-spacing: .5px; text-shadow: 0 0 2px #fff, 0 0 2px #fff, 0 0 3px #fff; }
.stamp-green { left: 378px; top: 230px; color: #8cc474; }
.stamp-orange { left: 685px; top: 580px; color: #ee8466; }
.stamp-grey { left: 1372px; top: 517px; font-size: 20px; line-height: 21px; color: #5f5f5f; transform: rotate(-20deg); }
```
